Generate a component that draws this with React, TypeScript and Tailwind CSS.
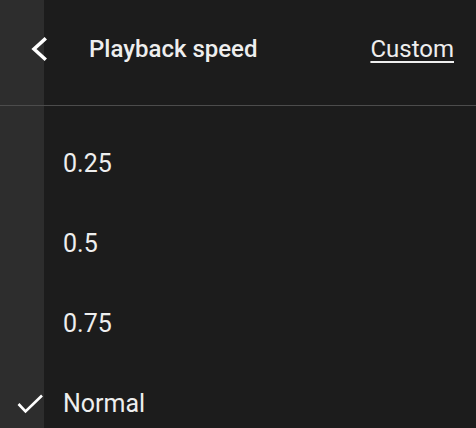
import React from "react";

const speeds = ["0.25", "0.5", "0.75", "Normal"];

export default function App() {
  return (
    <div
      className="w-[476px] h-[428px] overflow-hidden text-[#eeeeee] bg-[linear-gradient(to_right,#2d2d2d_44px,#1c1c1c_44px)]"
      style={{ fontFamily: "Roboto, 'Liberation Sans', sans-serif" }}
    >
      <div className="flex items-center h-[105px] pb-[8px] pr-[22px]">
        <div className="w-[89px] h-[96px] shrink-0">
          <svg width="89" height="96" viewBox="0 0 89 96">
            <polyline
              points="44.5,38.5 34,48 44.5,57.5"
              fill="none"
              stroke="#ffffff"
              strokeWidth="3.5"
              strokeLinecap="square"
            />
          </svg>
        </div>
        <div className="flex-1 text-[24px] font-medium">Playback speed</div>
        <div className="text-[24px] underline decoration-[1.5px] underline-offset-[4px]">Custom</div>
      </div>
      <div className="h-px bg-[#4c4c4c]" />
      <div className="flex flex-col pt-[18px]">
        {speeds.map((s) => (
          <div key={s} className="flex items-center h-[80px]">
            <div className="w-[63px] h-[80px] shrink-0">
              {s === "Normal" && (
                <svg width="63" height="80" viewBox="0 0 63 80">
                  <polyline
                    points="18.5,40 25.5,47.5 42,31.5"
                    fill="none"
                    stroke="#ffffff"
                    strokeWidth="2.6"
                  />
                </svg>
              )}
            </div>
            <div className="text-[25px]">{s}</div>
          </div>
        ))}
      </div>
    </div>
  );
}
